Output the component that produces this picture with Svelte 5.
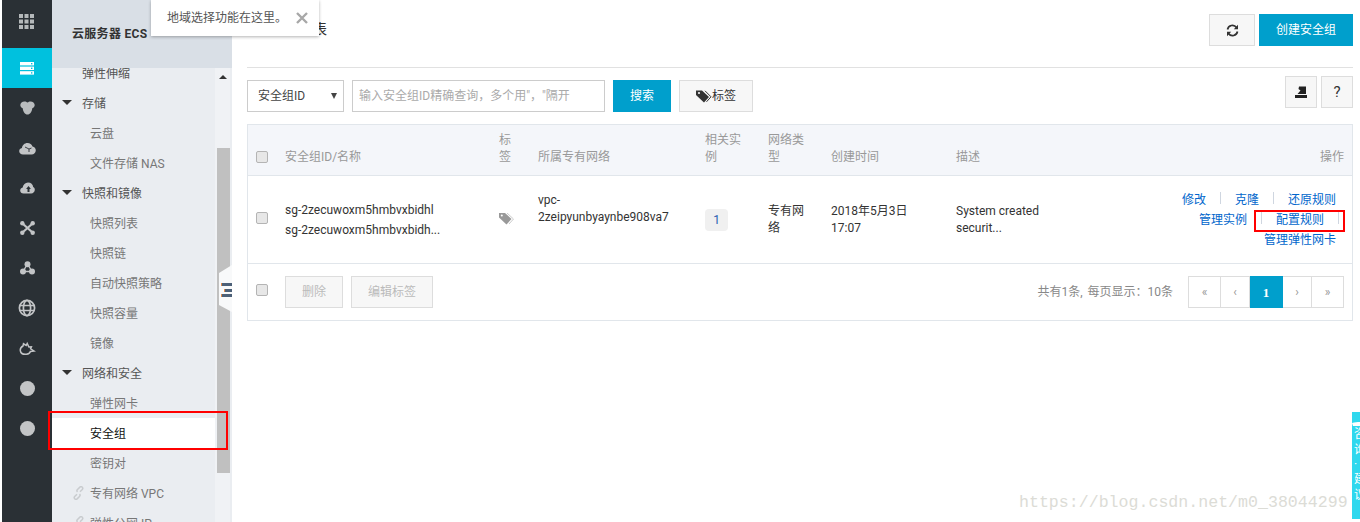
<script>
  const menu = [
    { t: '弹性伸缩', k: 'head' },
    { t: '存储', k: 'group' },
    { t: '云盘', k: 'sub' },
    { t: '文件存储 NAS', k: 'sub' },
    { t: '快照和镜像', k: 'group' },
    { t: '快照列表', k: 'sub' },
    { t: '快照链', k: 'sub' },
    { t: '自动快照策略', k: 'sub' },
    { t: '快照容量', k: 'sub' },
    { t: '镜像', k: 'sub' },
    { t: '网络和安全', k: 'group' },
    { t: '弹性网卡', k: 'sub' },
    { t: '安全组', k: 'sub active' },
    { t: '密钥对', k: 'sub' },
    { t: '专有网络 VPC', k: 'sub link' },
    { t: '弹性公网 IP', k: 'sub link' }
  ];
  const pages = [
    { t: '«', c: 'w33' },
    { t: '‹', c: 'w29' },
    { t: '1', c: 'w33 on' },
    { t: '›', c: 'w29' },
    { t: '»', c: 'w32' }
  ];
</script>

<div class="page">
  <nav class="rail">
    <div class="cell first">
      <svg width="16" height="16" viewBox="0 0 16 16"><g fill="#b4b8ba"><rect x="0" y="0" width="4" height="4"/><rect x="5.5" y="0" width="4" height="4"/><rect x="11" y="0" width="4" height="4"/><rect x="0" y="5.5" width="4" height="4"/><rect x="5.5" y="5.5" width="4" height="4"/><rect x="11" y="5.5" width="4" height="4"/><rect x="0" y="11" width="4" height="4"/><rect x="5.5" y="11" width="4" height="4"/><rect x="11" y="11" width="4" height="4"/></g></svg>
    </div>
    <div class="cell current">
      <svg width="14" height="13" viewBox="0 0 14 13"><g fill="#fff"><rect y="0" width="14" height="3.4"/><rect y="4.6" width="14" height="3.4"/><rect y="9.2" width="14" height="3.4"/></g><g fill="#00c1de"><rect x="11" y="1" width="1.4" height="1.4"/><rect x="11" y="5.6" width="1.4" height="1.4"/><rect x="11" y="10.2" width="1.4" height="1.4"/></g></svg>
    </div>
    <div class="cell">
      <svg width="15" height="14" viewBox="0 0 15 14"><path fill="#b9bcbe" d="M4.500.5c1.200 0 2.100.5 3 1 .9-.5 1.800-1 3-1 2.300 0 4.200 1.500 4.200 3.600 0 1.600-1 2.700-2.400 3.100C11.900 10.600 10 13.500 7.500 13.500S3.100 10.600 2.700 7.200C1.300 6.800.3 5.700.3 4.100.3 2 2.200.5 4.500.5z"/></svg>
    </div>
    <div class="cell">
      <svg width="17" height="13" viewBox="0 0 17 13"><path fill="#c2c4c6" d="M4 12.500C1.800 12.500.2 11 .2 9.200c0-1.600 1.100-2.900 2.700-3.200C3.300 3.300 5.500 1 8.500 1c2.400 0 4.300 1.400 5 3.400 1.900.3 3.300 2 3.300 3.900 0 2.400-1.900 4.200-4.200 4.200z"/><path fill="none" stroke="#2a3035" stroke-width=".9" d="M6 5l4 2 2.500-1M10 7v3"/></svg>
    </div>
    <div class="cell">
      <svg width="15" height="12" viewBox="0 0 15 12"><path fill="#c2c4c6" d="M3.500 11.500C1.600 11.500.2 10.200.2 8.500c0-1.500 1-2.700 2.500-3C3.200 2.700 5.200.5 8 .5c2.900 0 5 2 5.200 4.600 1 .5 1.600 1.500 1.600 2.700 0 2-1.600 3.700-3.600 3.700z"/><path fill="#2a3035" d="M8.500 4l2.400 3H9.500v3H7.500V7H6.100z"/></svg>
    </div>
    <div class="cell">
      <svg width="15" height="14" viewBox="0 0 15 14"><path stroke="#c2c4c6" stroke-width="2.200" d="M2.500 2.500l10 9M12.500 2.500l-10 9"/><g fill="#c2c4c6"><circle cx="2.300" cy="2.300" r="2.200"/><circle cx="12.700" cy="2.300" r="2.200"/><circle cx="2.300" cy="11.700" r="2.200"/><circle cx="12.700" cy="11.700" r="2.200"/></g></svg>
    </div>
    <div class="cell">
      <svg width="15" height="14" viewBox="0 0 15 14"><path stroke="#c2c4c6" stroke-width="1.400" fill="none" d="M7.500 3L3 10.500h9z"/><g fill="#c2c4c6"><circle cx="7.500" cy="3.200" r="3"/><circle cx="3" cy="10.600" r="3"/><circle cx="12" cy="10.600" r="3"/></g></svg>
    </div>
    <div class="cell">
      <svg width="18" height="18" viewBox="0 0 18 18"><g fill="none" stroke="#c2c4c6" stroke-width="1.700"><circle cx="9" cy="9" r="7.600"/><ellipse cx="9" cy="9" rx="3.600" ry="7.600"/><path d="M1.600 6.500h14.800M1.600 11.500h14.800"/></g></svg>
    </div>
    <div class="cell">
      <svg width="17" height="15" viewBox="0 0 17 15"><path fill="none" stroke="#c2c4c6" stroke-width="1.500" d="M4 5c-2 1-3 3-2.600 5 .5 2.500 3 3.500 6 3.200 2-.2 3.500-1 4-2.700l3.600-.5-3.400-2.200.8-2-2.500.2L8.200 2.500 7.200 4.500 4.500 2.800z"/></svg>
    </div>
    <div class="cell"><span class="dot"></span></div>
    <div class="cell"><span class="dot"></span></div>
  </nav>

  <aside class="side">
    <header class="side-head">云服务器 ECS</header>
    <ul class="menu">
      {#each menu as m}
        <li class={m.k}>
          {#if m.k === 'group'}<span class="caret"></span>{/if}
          {#if m.k.includes('link')}
            <svg class="chain" width="13" height="14" viewBox="0 0 13 14"><g fill="none" stroke="#c9cccf" stroke-width="1.500"><path d="M5 8.200l-2.300 2.300a1.700 1.700 0 0 0 2.400 2.400l2.400-2.400a1.700 1.700 0 0 0 0-2.400"/><path d="M8 5.800l2.300-2.300a1.700 1.700 0 0 0-2.400-2.400L5.500 3.500a1.700 1.700 0 0 0 0 2.400"/></g></svg>
          {/if}
          {m.t}
        </li>
      {/each}
    </ul>
    <div class="track">
      <span class="up"></span>
      <span class="thumb"></span>
    </div>
    <button class="tab" aria-label="收起">
      <i class="bar"></i><i class="bar short"></i><i class="bar"></i>
    </button>
    <span class="redbox menu-mark"></span>
  </aside>

  <main class="main">
    <div class="topbar">
      <h1>安全组列表</h1>
      <div class="top-actions">
        <button class="btn refresh" aria-label="刷新">
          <svg width="13" height="13" viewBox="0 0 13 13"><g fill="none" stroke="#333" stroke-width="1.700"><path d="M1.500 5.500A5 5 0 0 1 10.500 3.500"/><path d="M11.500 7.500A5 5 0 0 1 2.500 9.500"/></g><path fill="#333" d="M12 .8v4.400H7.800zM1 12.200V7.800h4.200z"/></svg>
        </button>
        <button class="btn primary create">创建安全组</button>
      </div>
    </div>

    <div class="toolbar">
      <div class="filters">
        <div class="select">安全组ID<span class="sel-caret"></span></div>
        <input class="search" placeholder="输入安全组ID精确查询，多个用&quot;，&quot;隔开" />
        <button class="btn primary go">搜索</button>
        <button class="btn tagbtn">
          <svg width="16" height="13" viewBox="0 0 16 13"><path fill="#333" d="M0 1.500V.5h6l7 6.500-5 5.500L0 5z"/><path fill="none" stroke="#333" d="M9 .8l6 6-4.500 5"/><circle cx="3" cy="3" r="1.100" fill="#f7f7f7"/></svg>标签
        </button>
      </div>
      <div class="tools">
        <button class="btn square" aria-label="导出">
          <svg width="12" height="12" viewBox="0 0 12 12"><path fill="#222" d="M0 9h12v3H0z"/><path fill="#222" d="M4 .5h7V8H2.500L5.500 4.500 3.500 3z"/></svg>
        </button>
        <button class="btn square help">?</button>
      </div>
    </div>

    <section class="table">
      <div class="cols thead">
        <div class="chk"><input type="checkbox" aria-label="全选" /></div>
        <div>安全组ID/名称</div>
        <div>标<br />签</div>
        <div>所属专有网络</div>
        <div>相关实<br />例</div>
        <div>网络类<br />型</div>
        <div>创建时间</div>
        <div>描述</div>
        <div class="op-head">操作</div>
      </div>

      <div class="cols trow">
        <div class="chk"><input type="checkbox" aria-label="选择" /></div>
        <div class="ids">sg-2zecuwoxm5hmbvxbidhl<br />sg-2zecuwoxm5hmbvxbidh...</div>
        <div class="tagcell">
          <svg width="16" height="12" viewBox="0 0 16 12"><path fill="#999" d="M0 1V0h6l6.500 6-5 5.500L0 4.500z"/><path fill="none" stroke="#ccc" d="M8 0l6.500 6-4.500 5"/><circle cx="2.800" cy="2.600" r="1" fill="#fff"/></svg>
        </div>
        <div class="vpc">vpc-<br />2zeipyunbyaynbe908va7</div>
        <div><span class="badge">1</span></div>
        <div>专有网<br />络</div>
        <div>2018年5月3日<br />17:07</div>
        <div>System created<br />securit...</div>
        <div class="ops">
          <div class="oprow"><a href="#a">修改</a><i class="sep"></i><a href="#a">克隆</a><i class="sep"></i><a href="#a">还原规则</a></div>
          <div class="oprow second"><a href="#a">管理实例</a><i class="sep"></i><a href="#a">配置规则</a><i class="sep"></i></div>
          <div class="oprow"><a href="#a">管理弹性网卡</a></div>
          <span class="redbox op-mark"></span>
        </div>
      </div>

      <div class="tfoot">
        <div class="chk"><input type="checkbox" aria-label="全选" /></div>
        <button class="btn off del">删除</button>
        <button class="btn off edit">编辑标签</button>
        <div class="count">共有1条, 每页显示：10条</div>
        <div class="pager">
          {#each pages as p}<span class={p.c}>{p.t}</span>{/each}
        </div>
      </div>
    </section>
  </main>

  <div class="tooltip">
    地域选择功能在这里。
    <svg class="close" width="12" height="12" viewBox="0 0 12 12"><path fill="none" stroke="#a8a8a8" stroke-width="2.400" d="M1 1l10 10M11 1L1 11"/></svg>
  </div>

  <div class="float">
    <svg width="8" height="8" viewBox="0 0 8 8"><path fill="#fff" d="M0 2c3-1 5-1 8-1v4H1z"/></svg>
    <span>咨</span><span>询</span><em>·</em><span>建</span><span>议</span>
  </div>
  <div class="mark">https://blog.csdn.net/m0_38044299</div>
</div>

<style>
  :global(body) { margin: 0; background: #fff; overflow: hidden; }
  .page {
    position: relative;
    display: flex;
    width: 1360px;
    height: 522px;
    padding-left: 2px;
    box-sizing: border-box;
    overflow: hidden;
    font: 12px/17px Roboto, "Noto Sans CJK SC", sans-serif;
    color: #333;
  }
  button { font: inherit; cursor: pointer; }

  .rail { width: 50px; flex: none; background: #2a3035; }
  .cell { height: 40px; display: flex; align-items: center; justify-content: center; }
  .cell.first { height: 48px; padding-bottom: 4px; box-sizing: border-box; }
  .cell.current { background: #00c1de; }
  .dot { width: 15px; height: 15px; border-radius: 50%; background: #c2c4c6; }

  .side { position: relative; width: 180px; flex: none; background: #eaedf1; }
  .side-head {
    position: relative;
    z-index: 1;
    height: 68px;
    padding-left: 20px;
    box-sizing: border-box;
    display: flex;
    align-items: center;
    background: #d9dfe6;
    font-weight: 700;
    letter-spacing: .3px;
    color: #333;
  }
  .menu { list-style: none; margin: -10px 0 0; padding: 0; width: 163px; }
  .menu li { position: relative; height: 30px; line-height: 32px; white-space: nowrap; box-sizing: border-box; }
  .menu .head, .menu .group { padding-left: 30px; color: #555; }
  .menu .sub { padding-left: 38px; color: #777; }
  .menu .active { background: #fff; color: #111; }
  .caret {
    position: absolute;
    left: 10px;
    top: 12px;
    border: 5px solid transparent;
    border-top: 5px solid #333;
    border-bottom: 0;
  }
  .chain { position: absolute; left: 20px; top: 8px; }
  .track { position: absolute; left: 163px; top: 68px; bottom: 0; width: 15px; background: #f0f2f5; }
  .up {
    position: absolute;
    left: 4px;
    top: 7px;
    border: 4px solid transparent;
    border-bottom: 4px solid #333;
    border-top: 0;
  }
  .thumb { position: absolute; left: 2px; right: 0; top: 80px; height: 325px; background: #c0c0c0; }
  .tab {
    position: absolute;
    left: 167px;
    top: 265px;
    width: 13px;
    height: 47px;
    border: 0;
    padding: 18px 0 0 2px;
    background: #f8f9fa;
    clip-path: polygon(0 8px, 100% 0, 100% 100%, 0 40px);
    display: flex;
    flex-direction: column;
    align-items: flex-end;
    gap: 2.500px;
  }
  .bar { display: block; width: 11px; height: 3px; background: #4c6078; border-left: 1px solid #e08a4a; box-sizing: border-box; }
  .bar.short { width: 8px; }

  .redbox { position: absolute; border: 2px solid #f00; box-sizing: border-box; pointer-events: none; z-index: 2; }
  .menu-mark { left: -4px; top: 411px; width: 180px; height: 39px; }

  .main { flex: 1; min-width: 0; padding: 0 7px 0 15px; }
  .topbar {
    height: 68px;
    box-sizing: border-box;
    border-bottom: 1px solid #e1e1e1;
    display: flex;
    justify-content: space-between;
    padding-top: 14px;
  }
  h1 { margin: 8px 0 0 10px; font-size: 14px; line-height: 14px; font-weight: 400; color: #333; }
  .top-actions { display: flex; gap: 4px; }

  .btn {
    height: 32px;
    box-sizing: border-box;
    border: 1px solid #ddd;
    background: #f7f7f7;
    color: #333;
    padding: 0;
    display: flex;
    align-items: center;
    justify-content: center;
  }
  .btn.primary { background: #009fcc; border-color: #009fcc; color: #fff; }
  .refresh { width: 46px; }
  .create { width: 94px; }
  .go { width: 58px; }
  .tagbtn { width: 74px; }
  .square { width: 32px; }
  .help { font-size: 15px; }

  .toolbar { height: 56px; box-sizing: border-box; padding-top: 8px; display: flex; justify-content: space-between; align-items: flex-start; }
  .filters { display: flex; gap: 8px; margin-top: 4px; }
  .tools { display: flex; gap: 4px; }
  .select {
    position: relative;
    width: 97px;
    height: 32px;
    box-sizing: border-box;
    border: 1px solid #ccc;
    padding-left: 10px;
    line-height: 31px;
    color: #444;
  }
  .sel-caret {
    position: absolute;
    right: 6px;
    top: 12px;
    border: 3.500px solid transparent;
    border-top: 6px solid #444;
    border-bottom: 0;
  }
  .search {
    width: 253px;
    height: 32px;
    box-sizing: border-box;
    border: 1px solid #ccc;
    padding: 0 6px;
    font: inherit;
    outline: none;
  }
  .search::placeholder { color: #aaa; opacity: 1; }

  .table { border: 1px solid #e1e6eb; }
  .cols { display: grid; grid-template-columns: 29px 214px 39px 167px 63px 63px 125px 160px 1fr; }
  .cols > div { padding-left: 8px; }
  input[type='checkbox'] {
    appearance: none;
    display: block;
    width: 12px;
    height: 12px;
    margin: 0;
    border: 1px solid #b4b4b4;
    border-radius: 2px;
    background: #e7e7e7;
    box-sizing: border-box;
  }
  .thead {
    height: 51px;
    box-sizing: border-box;
    border-bottom: 1px solid #e1e6eb;
    background: #f4f6fa;
    color: #999;
    align-items: end;
    padding-bottom: 9px;
  }
  .thead .chk { padding-bottom: 3px; }
  .op-head { text-align: right; padding-right: 8px; }
  .trow {
    height: 88px;
    box-sizing: border-box;
    border-bottom: 1px solid #e1e6eb;
    align-items: center;
    color: #333;
  }
  .trow .chk { padding-bottom: 3px; }
  .ids { line-height: 20px; }
  .tagcell { display: flex; align-items: center; padding-bottom: 2px; }
  .vpc { align-self: start; padding-top: 16px; }
  .badge {
    display: block;
    width: 23px;
    height: 22px;
    line-height: 22px;
    text-align: center;
    border-radius: 4px;
    background: #f0f0f0;
    color: #2a5db0;
  }
  .ops { position: relative; padding-right: 16px; line-height: 20px; }
  .oprow { display: flex; justify-content: flex-end; align-items: center; gap: 14px; height: 20px; }
  .oprow.second { margin-right: -3px; }
  .oprow a { color: #06c; text-decoration: none; }
  .sep { width: 1px; height: 12px; margin-top: -4px; background: #cfd6e0; }
  .op-mark { right: 7px; top: 20px; width: 91px; height: 22px; }

  .tfoot { height: 56px; box-sizing: border-box; display: flex; align-items: flex-start; padding: 12px 8px 0; }
  .tfoot .chk { width: 29px; padding-top: 8px; flex: none; }
  .off { color: #bbb; }
  .del { width: 58px; margin-right: 8px; }
  .edit { width: 82px; }
  .count { margin-left: auto; color: #888; line-height: 32px; margin-right: 15px; word-spacing: 2px; }
  .pager { display: flex; height: 32px; }
  .pager span {
    height: 32px;
    box-sizing: border-box;
    border: 1px solid #ddd;
    border-left-width: 0;
    display: flex;
    align-items: center;
    justify-content: center;
    color: #999;
  }
  .pager span:first-child { border-left-width: 1px; }
  .w33 { width: 33px; }
  .w29 { width: 29px; }
  .w32 { width: 32px; }
  .pager .on { background: #009fcc; border-color: #009fcc; color: #fff; font-family: "Liberation Serif", serif; font-weight: 700; font-size: 13px; }

  .tooltip {
    position: absolute;
    left: 151px;
    top: 0;
    width: 168px;
    height: 36px;
    box-sizing: border-box;
    padding: 0 0 0 16px;
    background: #fff;
    box-shadow: 0 1px 3px rgba(0, 0, 0, .3);
    color: #555;
    line-height: 36px;
    z-index: 3;
  }
  .close { position: absolute; left: 145px; top: 12px; }

  .float {
    position: absolute;
    left: 1352px;
    top: 412px;
    width: 8px;
    height: 107px;
    background: #2fd8ee;
    color: #fff;
    overflow: hidden;
    padding: 9px 0 0 2px;
    box-sizing: border-box;
    display: flex;
    flex-direction: column;
    font-size: 12px;
    line-height: 16px;
  }
  .float em { font-style: normal; height: 13px; line-height: 13px; flex: none; }
  .float svg { margin-bottom: -3px; flex: none; margin-left: -2px; }
  .float span { width: 12px; flex: none; }
  .mark {
    position: absolute;
    left: 1019px;
    top: 492px;
    font: 16.600px/22px "Liberation Mono", monospace;
    color: #dcdcd6;
    pointer-events: none;
    white-space: nowrap;
  }
</style>
